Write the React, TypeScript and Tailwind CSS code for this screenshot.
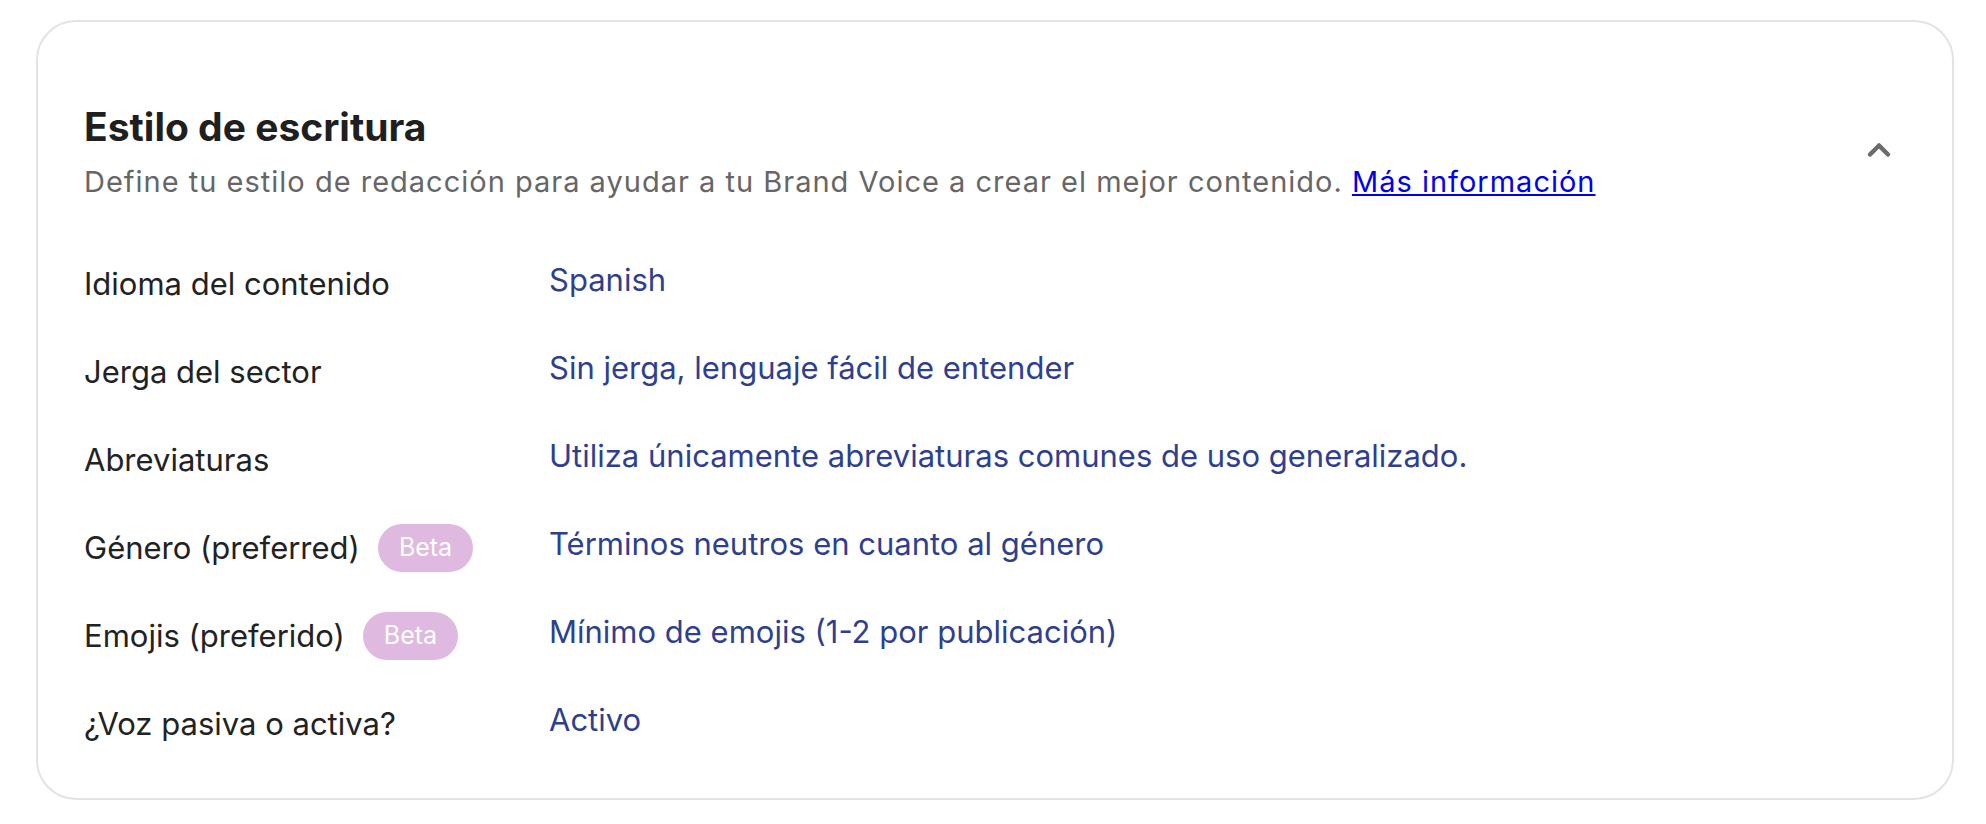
import { ChevronUp } from "lucide-react";

type Row = { label: string; value: string; beta?: boolean };

const ROWS: Row[] = [
  { label: "Idioma del contenido", value: "Spanish" },
  { label: "Jerga del sector", value: "Sin jerga, lenguaje fácil de entender" },
  { label: "Abreviaturas", value: "Utiliza únicamente abreviaturas comunes de uso generalizado." },
  { label: "Género (preferred)", value: "Términos neutros en cuanto al género", beta: true },
  { label: "Emojis (preferido)", value: "Mínimo de emojis (1-2 por publicación)", beta: true },
  { label: "¿Voz pasiva o activa?", value: "Activo" },
];

function BetaBadge() {
  return (
    <span className="ml-[18px] inline-flex h-[48px] items-center rounded-full bg-[#dfb9e0] px-[21px] text-[25px] text-white">
      Beta
    </span>
  );
}

export default function App() {
  return (
    <div className="min-h-screen bg-white pl-[36px] pr-[32px] pt-[20px] font-['Inter',sans-serif]">
      <section className="rounded-[40px] border-2 border-[#e3e3e3] bg-white pb-[30px] pl-[46px] pr-[55px] pt-[81px]">
        <div className="flex items-start justify-between">
          <div>
            <h2 className="text-[39px] font-bold leading-[48px] text-[#1f1f1f]">
              Estilo de escritura
            </h2>
            <p className="mt-[13px] text-[29px] leading-[36px] tracking-[1px] text-[#666666]">
              Define tu estilo de redacción para ayudar a tu Brand Voice a crear el mejor contenido.{" "}
              <a href="#" className="text-[#0000ee] underline">
                Más información
              </a>
            </p>
          </div>
          <button type="button" className="mt-[29px] text-[#6b6b6b]">
            <ChevronUp size={36} strokeWidth={3} />
          </button>
        </div>

        <div className="mt-[40px] flex flex-col">
          {ROWS.map((r) => (
            <div key={r.label} className="flex h-[88px] items-center">
              <div className="flex w-[465px] items-center text-[31px] text-[#222222]">
                <span>{r.label}</span>
                {r.beta && <BetaBadge />}
              </div>
              <div className="-mt-[8px] text-[31px] text-[#2f3f8f]">{r.value}</div>
            </div>
          ))}
        </div>
      </section>
    </div>
  );
}
